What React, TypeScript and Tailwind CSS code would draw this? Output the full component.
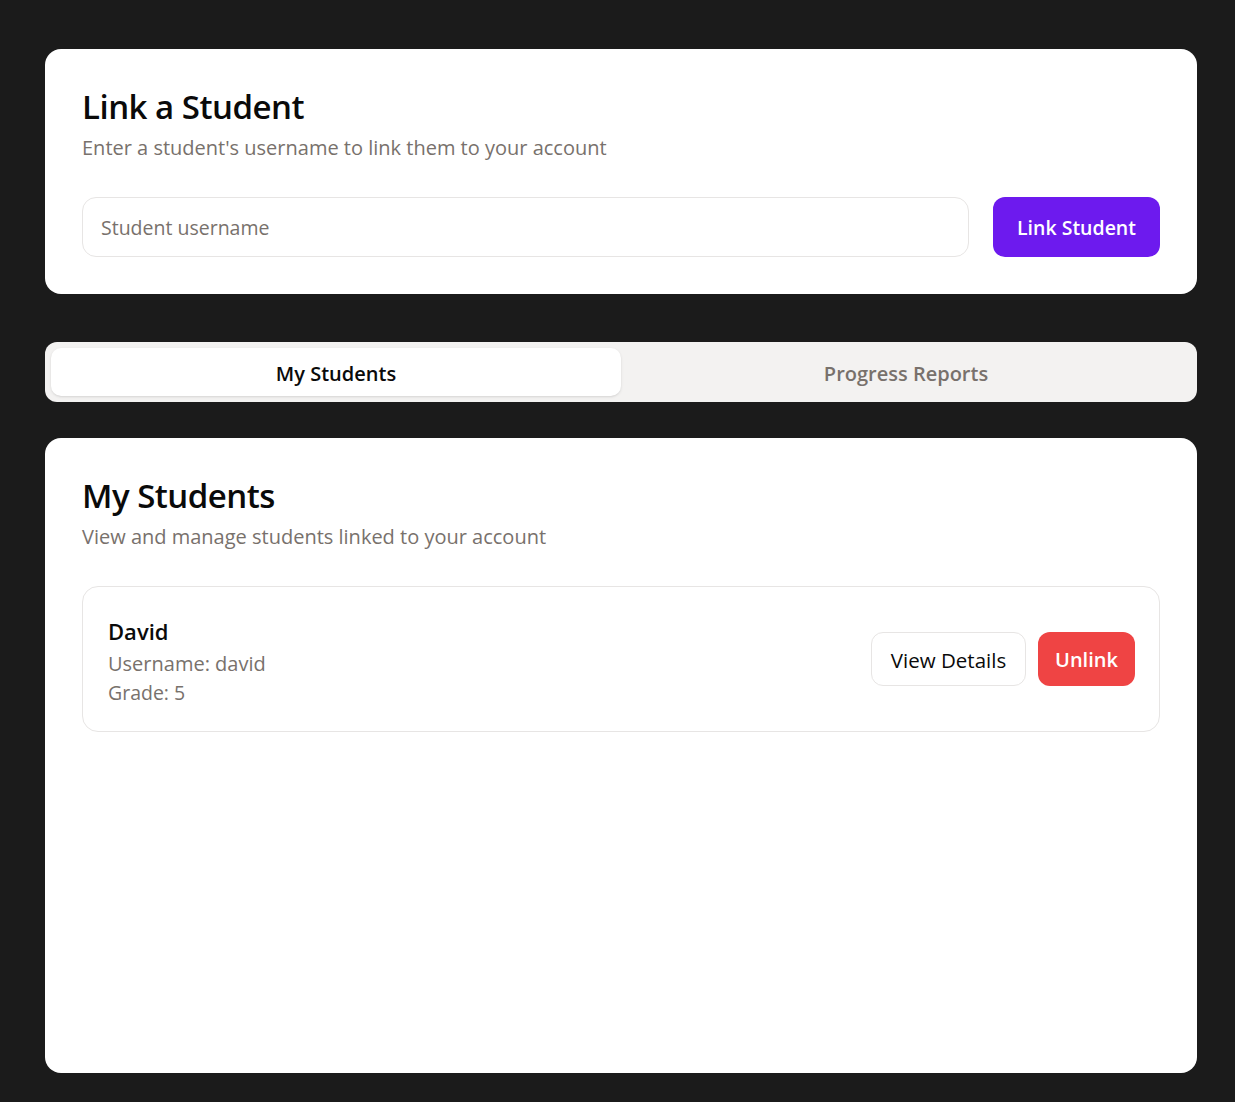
import { useState } from "react";

const font = { fontFamily: '"Open Sans", "Noto Sans", sans-serif' };

const App = () => {
  const [tab, setTab] = useState("students");
  const [username, setUsername] = useState("");

  return (
    <div style={font} className="min-h-[1102px] bg-[#1b1b1b] pl-[45px] pr-[38px] pt-[49px] pb-[29px]">
      <div className="flex flex-col">
        {/* link card */}
        <div className="rounded-[16px] bg-white px-[37px] pt-[36px] pb-[37px]">
          <h2 className="text-[33px] font-semibold leading-[44px] tracking-[-0.5px] text-[#0a0a0a]">Link a Student</h2>
          <p className="mt-[5px] text-[20px] leading-[27px] text-[#78716c]">
            Enter a student's username to link them to your account
          </p>
          <div className="mt-[36px] flex gap-[24px]">
            <input
              value={username}
              onChange={(e) => setUsername(e.target.value)}
              placeholder="Student username"
              className="h-[60px] flex-1 rounded-[14px] border border-[#e7e5e4] px-[18px] text-[19.5px] text-[#0a0a0a] placeholder:text-[#78716c] outline-none"
            />
            <button className="h-[60px] w-[167px] rounded-[12px] bg-[#6d1aee] pt-[2px] text-[19.5px] font-semibold text-white">
              Link Student
            </button>
          </div>
        </div>

        {/* tabs */}
        <div className="mt-[48px] grid h-[60px] grid-cols-2 rounded-[12px] bg-[#f3f2f1] p-[6px]">
          <button
            onClick={() => setTab("students")}
            className={
              tab === "students"
                ? "rounded-[10px] bg-white pt-[3px] text-[20px] font-semibold text-[#0a0a0a] shadow-sm"
                : "rounded-[10px] pt-[3px] text-[20px] font-semibold text-[#78716c]"
            }
          >
            My Students
          </button>
          <button
            onClick={() => setTab("reports")}
            className={
              tab === "reports"
                ? "rounded-[10px] bg-white pt-[3px] text-[20px] font-semibold text-[#0a0a0a] shadow-sm"
                : "rounded-[10px] pt-[3px] text-[20px] font-semibold text-[#78716c]"
            }
          >
            Progress Reports
          </button>
        </div>

        {/* students card */}
        <div className="mt-[36px] h-[635px] rounded-[16px] bg-white px-[37px] pt-[36px]">
          <h2 className="text-[33px] font-semibold leading-[44px] tracking-[-0.5px] text-[#0a0a0a]">My Students</h2>
          <p className="mt-[5px] text-[20px] leading-[27px] text-[#78716c]">
            View and manage students linked to your account
          </p>
          <div className="mt-[36px] flex items-center justify-between rounded-[16px] border border-[#e7e5e4] pl-[25px] pr-[24px] py-[24px]">
            <div className="pt-[5px]">
              <div className="text-[22px] font-semibold leading-[30px] text-[#0a0a0a]">David</div>
              <div className="mt-[3px] text-[20px] leading-[30px] text-[#78716c]">Username: david</div>
              <div className="text-[19.5px] leading-[28px] text-[#78716c]">Grade: 5</div>
            </div>
            <div className="flex gap-[12px]">
              <button className="h-[54px] w-[155px] rounded-[12px] border border-[#e7e5e4] bg-white pt-[2px] text-[20.5px] font-medium text-[#0a0a0a]">
                View Details
              </button>
              <button className="h-[54px] w-[97px] rounded-[12px] bg-[#ef4444] pt-[2px] text-[20px] font-semibold text-white">
                Unlink
              </button>
            </div>
          </div>
        </div>
      </div>
    </div>
  );
};

export default App;
